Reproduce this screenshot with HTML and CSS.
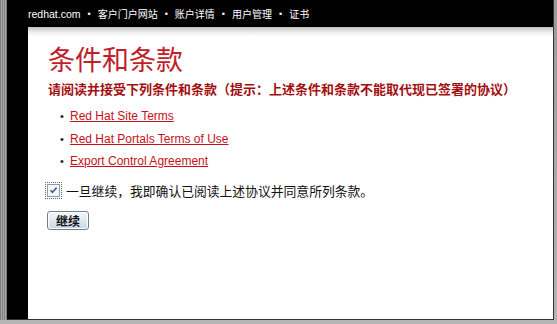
FILE: index.html
```html
<!DOCTYPE html>
<html lang="zh-CN">
<head>
<meta charset="utf-8">
<title>条件和条款</title>
<link rel="stylesheet" href="styles.css">
</head>
<body>
<div class="frame">
  <div class="stripe"></div>
  <div class="window">
    <div class="topbar">
      <span class="nav">redhat.com</span><span class="sep">•</span><span class="nav">客户门户网站</span><span class="sep">•</span><span class="nav">账户详情</span><span class="sep">•</span><span class="nav">用户管理</span><span class="sep">•</span><span class="nav">证书</span>
    </div>
    <div class="content">
      <h1 class="title">条件和条款</h1>
      <p class="notice">请阅读并接受下列条件和条款（提示：上述条件和条款不能取代现已签署的协议）</p>
      <ul class="terms">
        <li><a href="#">Red Hat Site Terms</a></li>
        <li><a href="#">Red Hat Portals Terms of Use</a></li>
        <li><a href="#">Export Control Agreement</a></li>
      </ul>
      <label class="agree"><input class="check" type="checkbox" checked><span>一旦继续，我即确认已阅读上述协议并同意所列条款。</span></label>
      <button class="btn" type="button">继续</button>
    </div>
  </div>
</div>
</body>
</html>
```
FILE: styles.css
```css
html, body {
  margin: 0;
  padding: 0;
}
body {
  width: 557px;
  height: 324px;
  overflow: hidden;
  background: linear-gradient(180deg, #9a9a9a 0, #b5b5b5 100%);
  font-family: "Liberation Sans", Arial, "Noto Sans CJK SC", sans-serif;
}
.frame {
  display: flex;
  height: 320px;
}
.stripe {
  width: 7px;
  background: repeating-linear-gradient(90deg, #7d7d7d 0 1px, #a9a9a9 1px 2px);
}
.window {
  width: 546px;
  background: #000;
  border-right: 1px solid #333;
  border-bottom: 1px solid #333;
  display: flex;
  flex-direction: column;
}
.topbar {
  height: 27px;
  padding-left: 21px;
  display: flex;
  align-items: center;
  color: #fff;
  font-size: 10px;
}
.topbar .nav:first-child {
  font-size: 10.5px;
}
.sep {
  margin: 0 7px;
  font-size: 9px;
}
.content {
  flex: 1;
  margin-left: 21px;
  background: linear-gradient(180deg, #c4c4c4 0, #f2f2f2 6px, #fff 10px);
  padding: 16px 0 0 20px;
}
.title {
  margin: 0;
  font-family: "Noto Sans CJK SC", sans-serif;
  font-weight: normal;
  font-size: 27px;
  line-height: 32px;
  color: #c0202a;
}
.notice {
  margin: 5px 0 0 0;
  font-family: "Noto Sans CJK SC", sans-serif;
  font-weight: bold;
  font-size: 13px;
  line-height: 18px;
  color: #a30e10;
}
.terms {
  margin: 7px 0 0 0;
  padding: 0 0 0 22px;
  list-style: none;
}
.terms li {
  font-size: 12px;
  line-height: 22.5px;
  display: flex;
  align-items: center;
}
.terms li::before {
  content: "•";
  color: #222;
  width: 10px;
  margin-left: -10px;
  font-size: 11px;
}
.terms a {
  color: #c8101a;
  text-decoration: underline;
}
.agree {
  display: flex;
  align-items: center;
  margin-top: 10px;
  height: 16px;
  font-family: "Noto Sans CJK SC", sans-serif;
  font-size: 12.8px;
  color: #111;
}
.check {
  -webkit-appearance: none;
  appearance: none;
  box-sizing: border-box;
  width: 13px;
  height: 13px;
  margin: 0 6px 0 -1px;
  border: 1px solid #8a9cae;
  background: #f6f8fb url("data:image/svg+xml,%3Csvg xmlns='http://www.w3.org/2000/svg' width='11' height='11' viewBox='0 0 11 11'%3E%3Cpath d='M2.5 5.2 L4.4 7.4 L8.6 2.6' fill='none' stroke='%234a5c8c' stroke-width='1.6'/%3E%3C/svg%3E") center / 11px 11px no-repeat;
  outline: 1px dotted #666;
  outline-offset: 1px;
}
.btn {
  display: block;
  margin: 12px 0 0 -1px;
  width: 42px;
  height: 19px;
  padding: 0;
  border: 1px solid #6c8199;
  border-radius: 3px;
  background: linear-gradient(180deg, #f4f8fb 0, #dfe8f0 50%, #c9d7e3 100%);
  box-shadow: inset 0 0 0 1px #fff;
  font-family: "Noto Sans CJK SC", sans-serif;
  font-size: 12px;
  font-weight: bold;
  color: #111;
  line-height: 17px;
}
```
